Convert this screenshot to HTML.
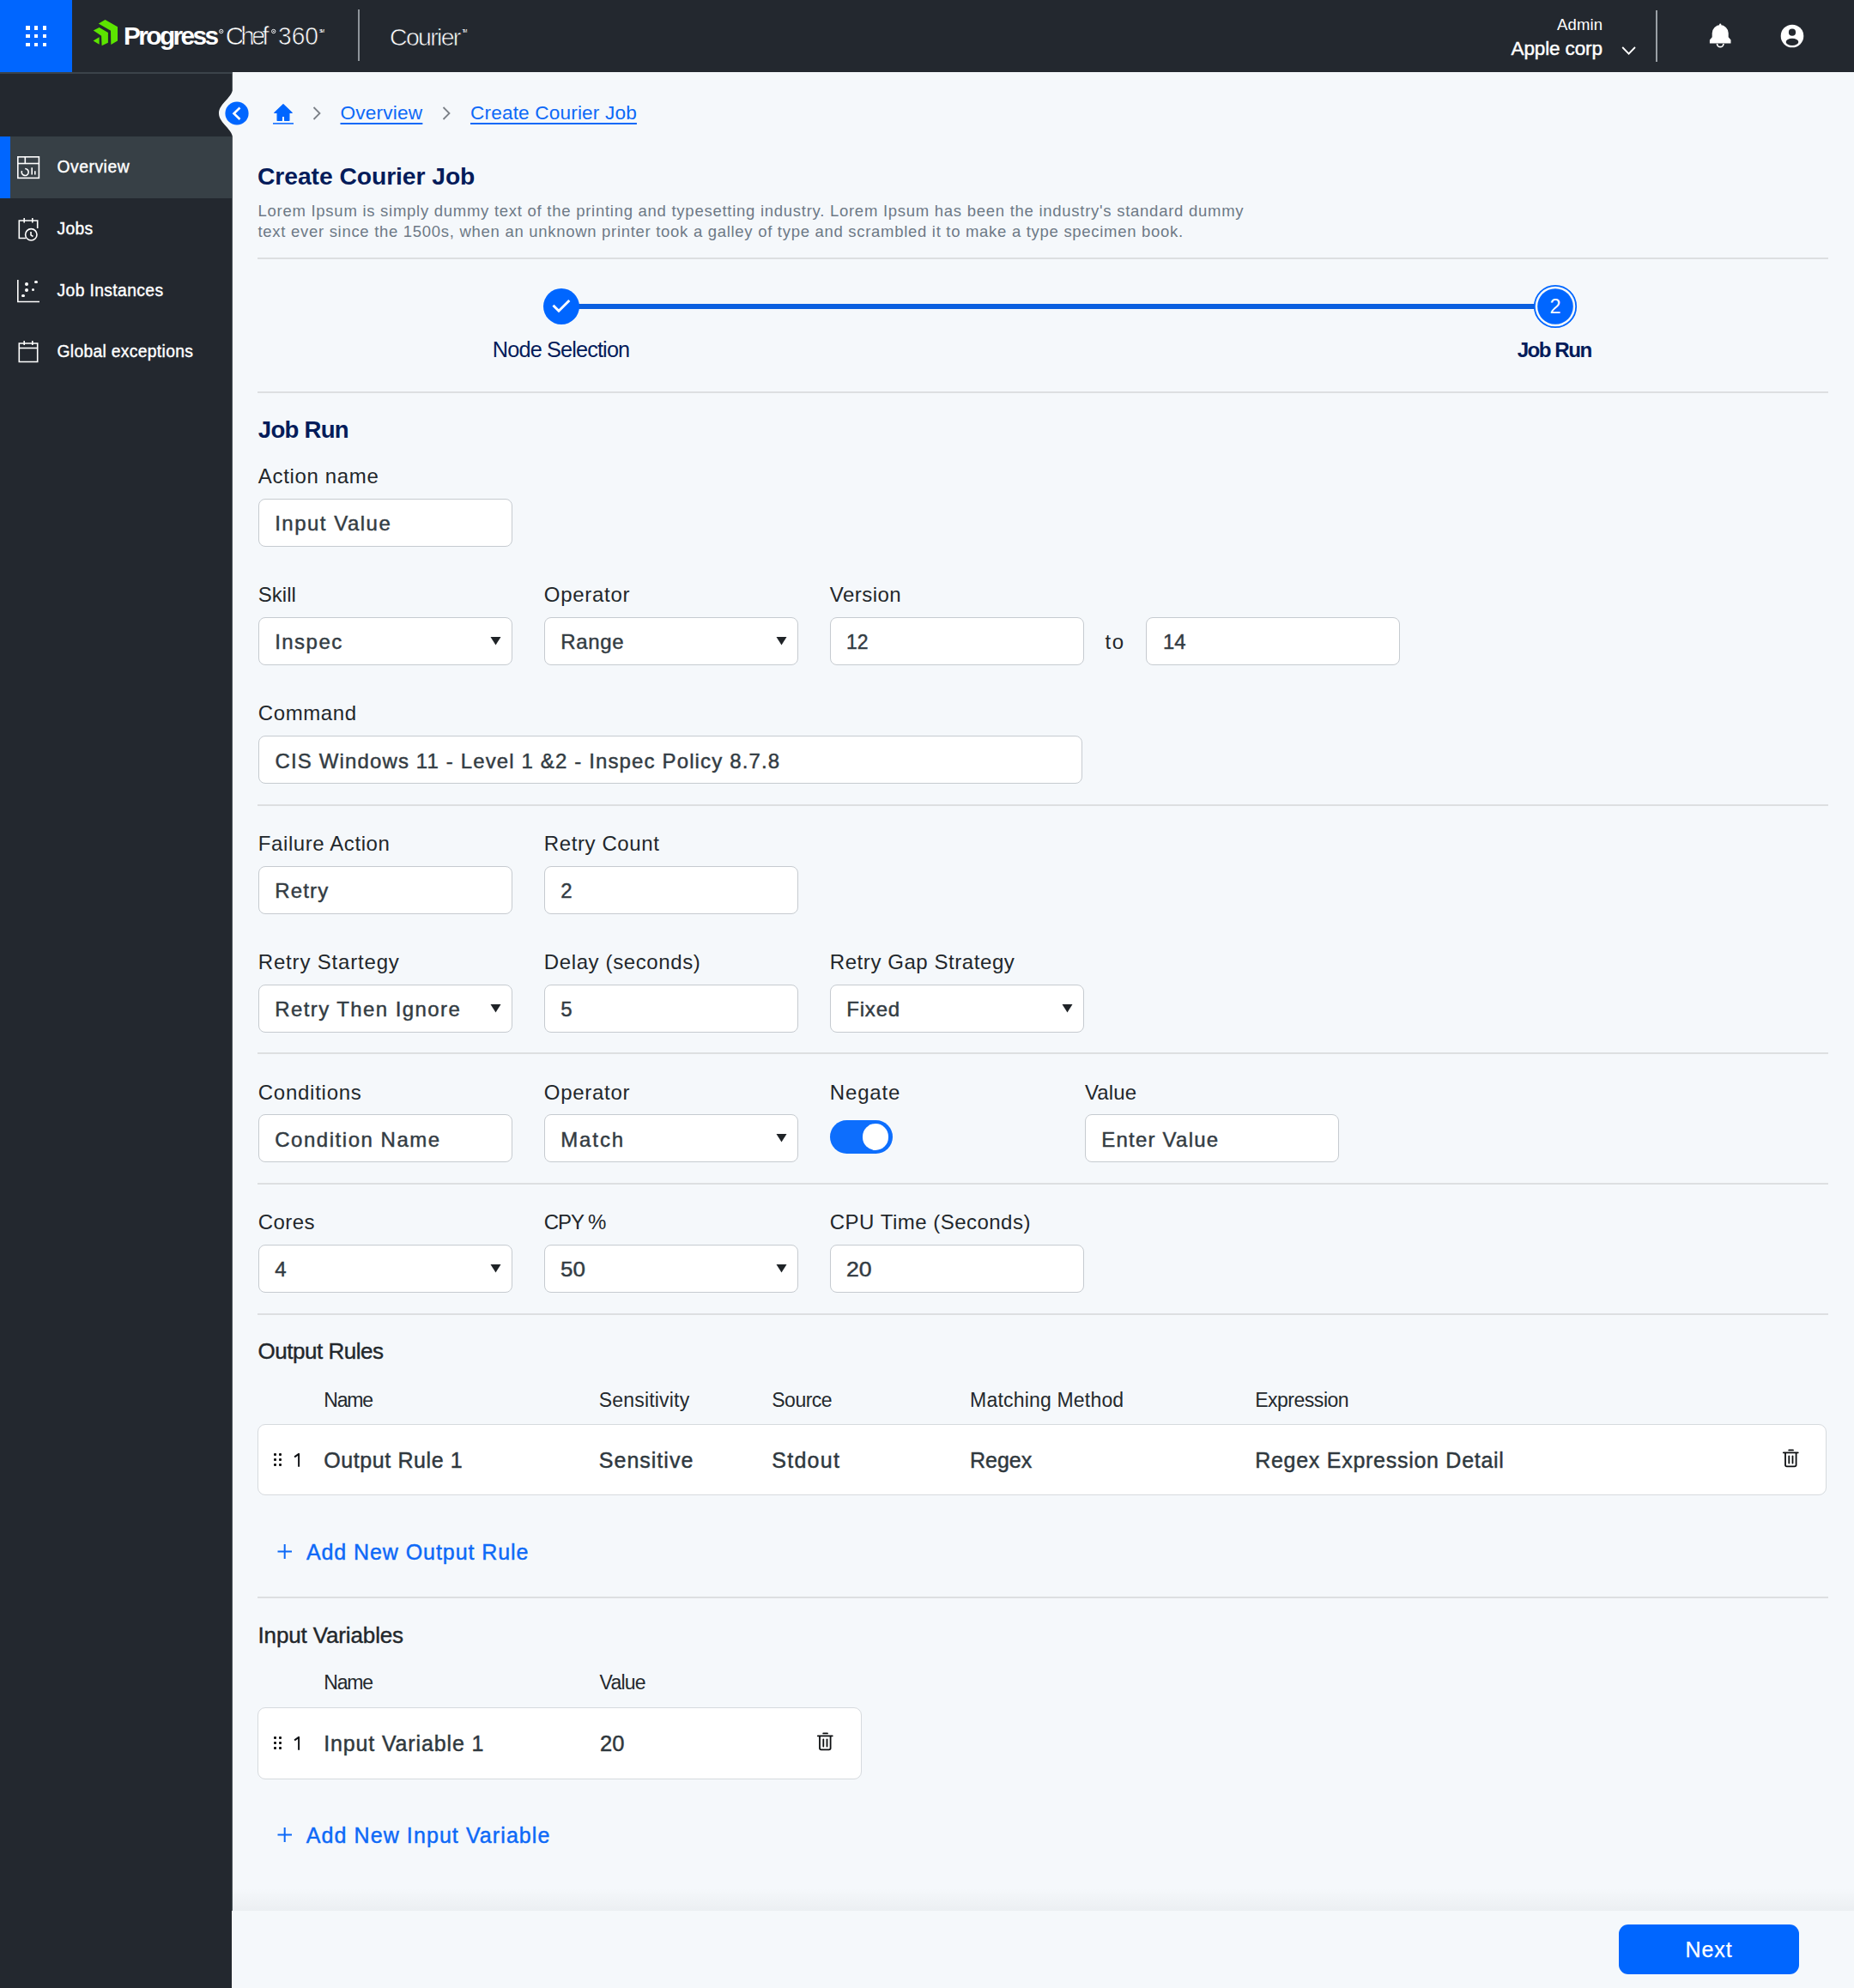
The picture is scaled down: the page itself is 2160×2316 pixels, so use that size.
<!DOCTYPE html>
<html><head><meta charset="utf-8"><title>Create Courier Job</title>
<style>
html,body{margin:0;padding:0;width:2160px;height:2316px;overflow:hidden;background:#f5f8fb;}
body{position:relative;font-family:"Liberation Sans", sans-serif;}
.t{position:absolute;white-space:nowrap;}
</style></head><body>
<div style="position:absolute;left:0px;top:0px;width:2160px;height:2316px;background:#f5f8fb;"></div>
<div style="position:absolute;left:0px;top:0px;width:2160px;height:84px;background:#23282f;"></div>
<div style="position:absolute;left:0px;top:0px;width:84px;height:84px;background:#0066ff;"></div>
<div style="position:absolute;left:30.0px;top:30.0px;width:4.5px;height:4.5px;background:#fff;"></div>
<div style="position:absolute;left:30.0px;top:39.75px;width:4.5px;height:4.5px;background:#fff;"></div>
<div style="position:absolute;left:30.0px;top:49.5px;width:4.5px;height:4.5px;background:#fff;"></div>
<div style="position:absolute;left:39.75px;top:30.0px;width:4.5px;height:4.5px;background:#fff;"></div>
<div style="position:absolute;left:39.75px;top:39.75px;width:4.5px;height:4.5px;background:#fff;"></div>
<div style="position:absolute;left:39.75px;top:49.5px;width:4.5px;height:4.5px;background:#fff;"></div>
<div style="position:absolute;left:49.5px;top:30.0px;width:4.5px;height:4.5px;background:#fff;"></div>
<div style="position:absolute;left:49.5px;top:39.75px;width:4.5px;height:4.5px;background:#fff;"></div>
<div style="position:absolute;left:49.5px;top:49.5px;width:4.5px;height:4.5px;background:#fff;"></div>
<svg style="position:absolute;left:0;top:0" width="200" height="84" viewBox="0 0 200 84">
<g fill="#5ce500">
<polygon points="114.8,27.4 122.5,23 137,31.2 137,47.6 129.3,52 129,35.8"/>
<polygon points="108.8,35.5 115.6,32 125.9,37.9 125.9,49.8 118.6,53.3 118.1,41.7"/>
<polygon points="108.6,47.4 115.6,43.3 115.6,51.7"/>
</g></svg>
<div class="t" style="left:144.00px;top:27.07px;font-size:29.80px;line-height:29.80px;color:#fff;font-weight:700;letter-spacing:-2.571px;">Progress</div>
<div class="t" style="left:262.80px;top:27.07px;font-size:29.80px;line-height:29.80px;color:#fff;letter-spacing:-4.050px;-webkit-text-stroke:0.65px #fff;-webkit-text-stroke-color:#23282f;">Chef</div>
<div class="t" style="left:323.50px;top:27.07px;font-size:29.80px;line-height:29.80px;color:#fff;-webkit-text-stroke:0.65px #fff;-webkit-text-stroke-color:#23282f;transform:scaleX(0.9448);transform-origin:0 0;">360</div>
<svg style="position:absolute;left:250px;top:28px" width="140" height="16" viewBox="250 28 140 16">
<circle cx="257.7" cy="36.5" r="2.2" fill="none" stroke="#fff" stroke-width="0.9"/>
<circle cx="257.7" cy="36.5" r="0.8" fill="#fff"/>
<circle cx="318.7" cy="36.5" r="2.2" fill="none" stroke="#fff" stroke-width="0.9"/>
<circle cx="318.7" cy="36.5" r="0.8" fill="#fff"/>
</svg>
<div class="t" style="left:372.00px;top:34.34px;font-size:5.50px;line-height:5.50px;color:#fff;letter-spacing:-2.250px;">SM</div>
<div style="position:absolute;left:417px;top:11px;width:2px;height:60px;background:#8e949a;"></div>
<div class="t" style="left:454.00px;top:28.57px;font-size:28.50px;line-height:28.50px;color:#fff;letter-spacing:-1.692px;-webkit-text-stroke:0.65px #fff;-webkit-text-stroke-color:#23282f;">Courier</div>
<div class="t" style="left:538.50px;top:34.34px;font-size:5.50px;line-height:5.50px;color:#fff;letter-spacing:-2.000px;">TM</div>
<div class="t" style="right:292.88px;text-align:right;top:19.64px;font-size:18.50px;line-height:18.50px;color:#fff;letter-spacing:0.125px;">Admin</div>
<div class="t" style="right:293.12px;text-align:right;top:46.25px;font-size:22.50px;line-height:22.50px;color:#fff;letter-spacing:-0.119px;-webkit-text-stroke:0.45px #fff;">Apple corp</div>
<svg style="position:absolute;left:1886px;top:50px" width="24" height="18"><path d="M4.2,5 L11.6,12.6 L19,5" fill="none" stroke="#fff" stroke-width="1.8"/></svg>
<div style="position:absolute;left:1929px;top:12px;width:2px;height:60px;background:#9aa0a6;"></div>
<svg style="position:absolute;left:1988px;top:24px" width="32" height="34" viewBox="0 0 32 34">
<rect x="15.1" y="3.4" width="2.2" height="3.5" rx="1" fill="#fff"/>
<path d="M6.7,19.2 L6.7,14.6 A9.5,9.5 0 0 1 25.7,14.6 L25.7,19.2 L28.5,22.6 L28.5,26.5 L3.9,26.5 L3.9,22.6 Z" fill="#fff"/>
<path d="M12.5,27 A3.7,3.7 0 0 0 19.9,27" fill="none" stroke="#fff" stroke-width="1.7"/>
</svg>
<svg style="position:absolute;left:2070px;top:24px" width="36" height="36" viewBox="0 0 36 36">
<circle cx="18" cy="18" r="13.3" fill="#fff"/>
<circle cx="18" cy="13.7" r="4.1" fill="#23282f"/>
<ellipse cx="18" cy="24.9" rx="7.3" ry="4.2" fill="#23282f"/>
</svg>
<div style="position:absolute;left:0px;top:84px;width:270.5px;height:2232px;background:#23282f;"></div>
<div style="position:absolute;left:0px;top:84px;width:271px;height:1.5px;background:#3b434a;"></div>
<div style="position:absolute;left:270px;top:84px;width:1.2px;height:2142px;background:#4f585e;"></div>
<div style="position:absolute;left:0px;top:159px;width:270px;height:72px;background:#374046;"></div>
<div style="position:absolute;left:0px;top:159px;width:12px;height:72px;background:#0066ff;"></div>
<div class="t" style="left:66.50px;top:185.06px;font-size:19.30px;line-height:19.30px;color:#fff;letter-spacing:0.532px;-webkit-text-stroke:0.4px #fff;">Overview</div>
<div class="t" style="left:66.50px;top:256.86px;font-size:19.30px;line-height:19.30px;color:#fff;letter-spacing:0.325px;-webkit-text-stroke:0.4px #fff;">Jobs</div>
<div class="t" style="left:66.50px;top:328.56px;font-size:19.30px;line-height:19.30px;color:#fff;letter-spacing:0.387px;-webkit-text-stroke:0.4px #fff;">Job Instances</div>
<div class="t" style="left:66.50px;top:400.36px;font-size:19.30px;line-height:19.30px;color:#fff;letter-spacing:0.319px;-webkit-text-stroke:0.4px #fff;">Global exceptions</div>
<svg style="position:absolute;left:0;top:84px" width="60" height="360" viewBox="0 84 60 360" fill="none" stroke="#fff" stroke-width="1.6">
<rect x="20.8" y="182.8" width="24.6" height="24.6"/>
<line x1="20.8" y1="190.5" x2="45.4" y2="190.5"/>
<line x1="29.3" y1="182.8" x2="29.3" y2="190.5"/>
<path d="M25.5,199 A4,4 0 1 0 29.2,196.5"/>
<line x1="37.2" y1="195.3" x2="37.2" y2="203.5"/>
<line x1="40.8" y1="199.3" x2="40.8" y2="203.5"/>
<path d="M30,277.5 L22.3,277.5 L22.3,257 L43.7,257 L43.7,266"/>
<line x1="28.2" y1="254" x2="28.2" y2="259.5"/>
<line x1="37.8" y1="254" x2="37.8" y2="259.5"/>
<circle cx="36.3" cy="273.3" r="6.7"/>
<path d="M36,270 L36,273.8 L38.5,275.5"/>
<path d="M20.8,326 L20.8,351.5 L46,351.5"/>
<path d="M22.3,400 L43.7,400 L43.7,421.5 L22.3,421.5 Z"/>
<line x1="22.3" y1="405.5" x2="43.7" y2="405.5"/>
<line x1="28.2" y1="397" x2="28.2" y2="402"/>
<line x1="37.8" y1="397" x2="37.8" y2="402"/>
</svg>
<div style="position:absolute;left:40.4px;top:326.6px;width:3.8px;height:3.8px;background:#fff;border-radius:50%;"></div>
<div style="position:absolute;left:29.3px;top:329.40000000000003px;width:3.8px;height:3.8px;background:#fff;border-radius:50%;"></div>
<div style="position:absolute;left:29.3px;top:336.1px;width:3.8px;height:3.8px;background:#fff;border-radius:50%;"></div>
<div style="position:absolute;left:36.6px;top:335.6px;width:3.8px;height:3.8px;background:#fff;border-radius:50%;"></div>
<div style="position:absolute;left:25.1px;top:342.70000000000005px;width:3.8px;height:3.8px;background:#fff;border-radius:50%;"></div>
<svg style="position:absolute;left:240px;top:96px" width="60" height="72" viewBox="240 96 60 72">
<path d="M272,100 C272,114 255,120 255,132 C255,144 272,150 272,164 Z" fill="#f5f8fb"/>
<circle cx="276" cy="132" r="13.6" fill="#0066ff"/>
<path d="M279.5,125.5 L272.5,132.2 L279.5,139" fill="none" stroke="#fff" stroke-width="2.6"/>
</svg>
<svg style="position:absolute;left:314px;top:116px" width="32" height="32" viewBox="314 116 32 32">
<path d="M330,121.6 L340.2,131.4 L336.9,131.4 L336.9,140.3 L331.6,140.3 L331.6,135.4 L328.4,135.4 L328.4,140.3 L323.1,140.3 L323.1,131.4 L319.8,131.4 Z" fill="#0066ff" stroke="#0066ff" stroke-width="1.2" stroke-linejoin="round"/>
<rect x="318" y="143" width="24" height="1.8" fill="#2a7cff"/>
</svg>
<svg style="position:absolute;left:363px;top:122px" width="14" height="20"><path d="M2.5,3 L9.5,10 L2.5,17" fill="none" stroke="#7b8087" stroke-width="1.8"/></svg>
<svg style="position:absolute;left:513.5px;top:122px" width="14" height="20"><path d="M2.5,3 L9.5,10 L2.5,17" fill="none" stroke="#7b8087" stroke-width="1.8"/></svg>
<div class="t" style="left:396.50px;top:121.16px;font-size:22.60px;line-height:22.60px;color:#0d69f7;letter-spacing:0.214px;text-decoration:underline;text-underline-offset:4px;text-decoration-thickness:1.6px;">Overview</div>
<div class="t" style="left:548.00px;top:121.16px;font-size:22.60px;line-height:22.60px;color:#0d69f7;letter-spacing:0.169px;text-decoration:underline;text-underline-offset:4px;text-decoration-thickness:1.6px;">Create Courier Job</div>
<div class="t" style="left:300.00px;top:190.84px;font-size:28.30px;line-height:28.30px;color:#041c5a;font-weight:700;letter-spacing:-0.081px;">Create Courier Job</div>
<div class="t" style="left:300.50px;top:236.54px;font-size:18.50px;line-height:18.50px;color:#6d7986;letter-spacing:0.733px;">Lorem Ipsum is simply dummy text of the printing and typesetting industry. Lorem Ipsum has been the industry&#x27;s standard dummy</div>
<div class="t" style="left:300.50px;top:260.54px;font-size:18.50px;line-height:18.50px;color:#6d7986;letter-spacing:0.705px;">text ever since the 1500s, when an unknown printer took a galley of type and scrambled it to make a type specimen book.</div>
<div style="position:absolute;left:300px;top:300.4px;width:1830px;height:2px;background:#dddfe1;"></div>
<div style="position:absolute;left:674px;top:354.3px;width:1114px;height:5.6px;background:#0a5fe0;"></div>
<svg style="position:absolute;left:600px;top:300px" width="1300" height="120" viewBox="600 300 1300 120">
<circle cx="654" cy="357" r="21" fill="#0066ff"/>
<path d="M644.5,355.8 L651,362.2 L663.3,350" fill="none" stroke="#fff" stroke-width="3"/>
<circle cx="1812" cy="357" r="24.2" fill="none" stroke="#0066ff" stroke-width="1.8"/>
<circle cx="1812" cy="357" r="20.8" fill="#0066ff"/>
</svg>
<div class="t" style="left:1312.00px;width:1000px;text-align:center;top:345.60px;font-size:23.50px;line-height:23.50px;color:#fff;">2</div>
<div class="t" style="left:153.57px;width:1000px;text-align:center;top:394.88px;font-size:25.30px;line-height:25.30px;color:#041c5a;letter-spacing:-0.865px;">Node Selection</div>
<div class="t" style="left:1310.75px;width:1000px;text-align:center;top:395.81px;font-size:24.20px;line-height:24.20px;color:#041c5a;font-weight:700;letter-spacing:-1.500px;">Job Run</div>
<div style="position:absolute;left:300px;top:456.4px;width:1830px;height:2px;background:#dddfe1;"></div>
<div class="t" style="left:300.80px;top:487.43px;font-size:27.60px;line-height:27.60px;color:#041c5a;font-weight:700;letter-spacing:-0.750px;">Job Run</div>
<div class="t" style="left:300.80px;top:542.98px;font-size:24.00px;line-height:24.00px;color:#22272b;letter-spacing:0.662px;">Action name</div>
<div style="position:absolute;left:300.5px;top:581px;width:296px;height:56px;background:#fff;border:1.7px solid #c6cbd0;border-radius:8px;box-sizing:border-box;"></div>
<div class="t" style="left:320.20px;top:598.28px;font-size:24.00px;line-height:24.00px;color:#333c43;letter-spacing:1.493px;-webkit-text-stroke:0.45px #333c43;">Input Value</div>
<div class="t" style="left:300.80px;top:680.68px;font-size:24.00px;line-height:24.00px;color:#22272b;">Skill</div>
<div class="t" style="left:633.80px;top:680.68px;font-size:24.00px;line-height:24.00px;color:#22272b;letter-spacing:0.707px;">Operator</div>
<div class="t" style="left:966.80px;top:680.68px;font-size:24.00px;line-height:24.00px;color:#22272b;letter-spacing:0.467px;">Version</div>
<div style="position:absolute;left:300.5px;top:719px;width:296px;height:56px;background:#fff;border:1.7px solid #c6cbd0;border-radius:8px;box-sizing:border-box;"></div>
<div class="t" style="left:320.20px;top:736.28px;font-size:24.00px;line-height:24.00px;color:#333c43;letter-spacing:1.460px;-webkit-text-stroke:0.45px #333c43;">Inspec</div>
<svg style="position:absolute;left:570.5px;top:741px" width="14" height="12"><path d="M0.5,1 L12.5,1 L6.5,10.5 Z" fill="#1f2327"/></svg>
<div style="position:absolute;left:633.5px;top:719px;width:296px;height:56px;background:#fff;border:1.7px solid #c6cbd0;border-radius:8px;box-sizing:border-box;"></div>
<div class="t" style="left:653.20px;top:736.28px;font-size:24.00px;line-height:24.00px;color:#333c43;letter-spacing:0.650px;-webkit-text-stroke:0.45px #333c43;">Range</div>
<svg style="position:absolute;left:903.5px;top:741px" width="14" height="12"><path d="M0.5,1 L12.5,1 L6.5,10.5 Z" fill="#1f2327"/></svg>
<div style="position:absolute;left:966.5px;top:719px;width:296px;height:56px;background:#fff;border:1.7px solid #c6cbd0;border-radius:8px;box-sizing:border-box;"></div>
<div class="t" style="left:986.20px;top:736.28px;font-size:24.00px;line-height:24.00px;color:#333c43;-webkit-text-stroke:0.45px #333c43;transform:scaleX(0.9559);transform-origin:0 0;">12</div>
<div class="t" style="left:1287.60px;top:735.98px;font-size:24.00px;line-height:24.00px;color:#22272b;letter-spacing:1.400px;">to</div>
<div style="position:absolute;left:1335.3px;top:719px;width:296px;height:56px;background:#fff;border:1.7px solid #c6cbd0;border-radius:8px;box-sizing:border-box;"></div>
<div class="t" style="left:1355.00px;top:736.28px;font-size:24.00px;line-height:24.00px;color:#333c43;-webkit-text-stroke:0.45px #333c43;transform:scaleX(0.9926);transform-origin:0 0;">14</div>
<div class="t" style="left:300.80px;top:819.28px;font-size:24.00px;line-height:24.00px;color:#22272b;letter-spacing:0.592px;">Command</div>
<div style="position:absolute;left:300.5px;top:857px;width:960px;height:56px;background:#fff;border:1.7px solid #c6cbd0;border-radius:8px;box-sizing:border-box;"></div>
<div class="t" style="left:320.50px;top:874.88px;font-size:24.00px;line-height:24.00px;color:#333c43;letter-spacing:1.134px;-webkit-text-stroke:0.45px #333c43;">CIS Windows 11 - Level 1 &amp;2 - Inspec Policy 8.7.8</div>
<div style="position:absolute;left:300px;top:936.9px;width:1830px;height:2px;background:#dddfe1;"></div>
<div class="t" style="left:300.80px;top:971.38px;font-size:24.00px;line-height:24.00px;color:#22272b;letter-spacing:0.587px;">Failure Action</div>
<div class="t" style="left:633.80px;top:971.38px;font-size:24.00px;line-height:24.00px;color:#22272b;letter-spacing:0.600px;">Retry Count</div>
<div style="position:absolute;left:300.5px;top:1008.7px;width:296px;height:56px;background:#fff;border:1.7px solid #c6cbd0;border-radius:8px;box-sizing:border-box;"></div>
<div class="t" style="left:320.20px;top:1025.98px;font-size:24.00px;line-height:24.00px;color:#333c43;letter-spacing:1.194px;-webkit-text-stroke:0.45px #333c43;">Retry</div>
<div style="position:absolute;left:633.5px;top:1008.7px;width:296px;height:56px;background:#fff;border:1.7px solid #c6cbd0;border-radius:8px;box-sizing:border-box;"></div>
<div class="t" style="left:653.20px;top:1025.98px;font-size:24.00px;line-height:24.00px;color:#333c43;-webkit-text-stroke:0.45px #333c43;">2</div>
<div class="t" style="left:300.80px;top:1109.48px;font-size:24.00px;line-height:24.00px;color:#22272b;letter-spacing:0.817px;">Retry Startegy</div>
<div class="t" style="left:633.80px;top:1109.48px;font-size:24.00px;line-height:24.00px;color:#22272b;letter-spacing:0.616px;">Delay (seconds)</div>
<div class="t" style="left:966.80px;top:1109.48px;font-size:24.00px;line-height:24.00px;color:#22272b;letter-spacing:0.566px;">Retry Gap Strategy</div>
<div style="position:absolute;left:300.5px;top:1146.9px;width:296px;height:56px;background:#fff;border:1.7px solid #c6cbd0;border-radius:8px;box-sizing:border-box;"></div>
<div class="t" style="left:320.20px;top:1164.18px;font-size:24.00px;line-height:24.00px;color:#333c43;letter-spacing:1.409px;-webkit-text-stroke:0.45px #333c43;">Retry Then Ignore</div>
<svg style="position:absolute;left:570.5px;top:1168.9px" width="14" height="12"><path d="M0.5,1 L12.5,1 L6.5,10.5 Z" fill="#1f2327"/></svg>
<div style="position:absolute;left:633.5px;top:1146.9px;width:296px;height:56px;background:#fff;border:1.7px solid #c6cbd0;border-radius:8px;box-sizing:border-box;"></div>
<div class="t" style="left:653.20px;top:1164.18px;font-size:24.00px;line-height:24.00px;color:#333c43;-webkit-text-stroke:0.45px #333c43;">5</div>
<div style="position:absolute;left:966.5px;top:1146.9px;width:296px;height:56px;background:#fff;border:1.7px solid #c6cbd0;border-radius:8px;box-sizing:border-box;"></div>
<div class="t" style="left:986.20px;top:1164.18px;font-size:24.00px;line-height:24.00px;color:#333c43;letter-spacing:0.825px;-webkit-text-stroke:0.45px #333c43;">Fixed</div>
<svg style="position:absolute;left:1236.5px;top:1168.9px" width="14" height="12"><path d="M0.5,1 L12.5,1 L6.5,10.5 Z" fill="#1f2327"/></svg>
<div style="position:absolute;left:300px;top:1226.4px;width:1830px;height:2px;background:#dddfe1;"></div>
<div class="t" style="left:300.80px;top:1260.88px;font-size:24.00px;line-height:24.00px;color:#22272b;letter-spacing:0.736px;">Conditions</div>
<div class="t" style="left:633.80px;top:1260.88px;font-size:24.00px;line-height:24.00px;color:#22272b;letter-spacing:0.707px;">Operator</div>
<div class="t" style="left:966.80px;top:1260.88px;font-size:24.00px;line-height:24.00px;color:#22272b;letter-spacing:0.845px;">Negate</div>
<div class="t" style="left:1264.00px;top:1260.88px;font-size:24.00px;line-height:24.00px;color:#22272b;letter-spacing:0.094px;">Value</div>
<div style="position:absolute;left:300.5px;top:1298.4px;width:296px;height:56px;background:#fff;border:1.7px solid #c6cbd0;border-radius:8px;box-sizing:border-box;"></div>
<div class="t" style="left:320.20px;top:1315.68px;font-size:24.00px;line-height:24.00px;color:#333c43;letter-spacing:1.533px;-webkit-text-stroke:0.45px #333c43;">Condition Name</div>
<div style="position:absolute;left:633.5px;top:1298.4px;width:296px;height:56px;background:#fff;border:1.7px solid #c6cbd0;border-radius:8px;box-sizing:border-box;"></div>
<div class="t" style="left:653.20px;top:1315.68px;font-size:24.00px;line-height:24.00px;color:#333c43;letter-spacing:1.894px;-webkit-text-stroke:0.45px #333c43;">Match</div>
<svg style="position:absolute;left:903.5px;top:1320.4px" width="14" height="12"><path d="M0.5,1 L12.5,1 L6.5,10.5 Z" fill="#1f2327"/></svg>
<div style="position:absolute;left:967.2px;top:1304.8px;width:72.4px;height:39px;background:#0d6efd;border-radius:20px;"></div>
<div style="position:absolute;left:1004.7px;top:1309.3px;width:30.4px;height:30.4px;background:#fff;border-radius:50%;"></div>
<div style="position:absolute;left:1263.5px;top:1298.4px;width:296px;height:56px;background:#fff;border:1.7px solid #c6cbd0;border-radius:8px;box-sizing:border-box;"></div>
<div class="t" style="left:1283.20px;top:1315.68px;font-size:24.00px;line-height:24.00px;color:#333c43;letter-spacing:1.233px;-webkit-text-stroke:0.45px #333c43;">Enter Value</div>
<div style="position:absolute;left:300px;top:1378.4px;width:1830px;height:2px;background:#dddfe1;"></div>
<div class="t" style="left:300.80px;top:1412.18px;font-size:24.00px;line-height:24.00px;color:#22272b;letter-spacing:0.400px;">Cores</div>
<div class="t" style="left:633.80px;top:1412.18px;font-size:24.00px;line-height:24.00px;color:#22272b;letter-spacing:-1.094px;">CPY %</div>
<div class="t" style="left:966.80px;top:1412.18px;font-size:24.00px;line-height:24.00px;color:#22272b;letter-spacing:0.484px;">CPU Time (Seconds)</div>
<div style="position:absolute;left:300.5px;top:1449.6px;width:296px;height:56px;background:#fff;border:1.7px solid #c6cbd0;border-radius:8px;box-sizing:border-box;"></div>
<div class="t" style="left:320.20px;top:1466.88px;font-size:24.00px;line-height:24.00px;color:#333c43;-webkit-text-stroke:0.45px #333c43;">4</div>
<svg style="position:absolute;left:570.5px;top:1471.6px" width="14" height="12"><path d="M0.5,1 L12.5,1 L6.5,10.5 Z" fill="#1f2327"/></svg>
<div style="position:absolute;left:633.5px;top:1449.6px;width:296px;height:56px;background:#fff;border:1.7px solid #c6cbd0;border-radius:8px;box-sizing:border-box;"></div>
<div class="t" style="left:653.20px;top:1466.88px;font-size:24.00px;line-height:24.00px;color:#333c43;-webkit-text-stroke:0.45px #333c43;transform:scaleX(1.0809);transform-origin:0 0;">50</div>
<svg style="position:absolute;left:903.5px;top:1471.6px" width="14" height="12"><path d="M0.5,1 L12.5,1 L6.5,10.5 Z" fill="#1f2327"/></svg>
<div style="position:absolute;left:966.5px;top:1449.6px;width:296px;height:56px;background:#fff;border:1.7px solid #c6cbd0;border-radius:8px;box-sizing:border-box;"></div>
<div class="t" style="left:986.20px;top:1466.88px;font-size:24.00px;line-height:24.00px;color:#333c43;-webkit-text-stroke:0.45px #333c43;transform:scaleX(1.1103);transform-origin:0 0;">20</div>
<div style="position:absolute;left:300px;top:1529.9px;width:1830px;height:2px;background:#dddfe1;"></div>
<div class="t" style="left:300.50px;top:1561.29px;font-size:26.00px;line-height:26.00px;color:#22272b;letter-spacing:-0.468px;-webkit-text-stroke:0.4px #22272b;">Output Rules</div>
<div class="t" style="left:377.20px;top:1619.53px;font-size:23.00px;line-height:23.00px;color:#24292d;letter-spacing:-1.125px;">Name</div>
<div class="t" style="left:697.80px;top:1619.53px;font-size:23.00px;line-height:23.00px;color:#24292d;letter-spacing:0.180px;">Sensitivity</div>
<div class="t" style="left:899.30px;top:1619.53px;font-size:23.00px;line-height:23.00px;color:#24292d;letter-spacing:-0.515px;">Source</div>
<div class="t" style="left:1130.10px;top:1619.53px;font-size:23.00px;line-height:23.00px;color:#24292d;letter-spacing:0.188px;">Matching Method</div>
<div class="t" style="left:1462.20px;top:1619.53px;font-size:23.00px;line-height:23.00px;color:#24292d;letter-spacing:-0.483px;">Expression</div>
<div style="position:absolute;left:299.5px;top:1658.7px;width:1828.5px;height:83.7px;background:#fff;border:1.7px solid #d6dade;border-radius:9px;box-sizing:border-box;"></div>
<div style="position:absolute;left:319.0px;top:1693px;width:3.2px;height:3.2px;background:#111;border-radius:1px;"></div>
<div style="position:absolute;left:319.0px;top:1699px;width:3.2px;height:3.2px;background:#111;border-radius:1px;"></div>
<div style="position:absolute;left:319.0px;top:1705px;width:3.2px;height:3.2px;background:#111;border-radius:1px;"></div>
<div style="position:absolute;left:325.1px;top:1693px;width:3.2px;height:3.2px;background:#111;border-radius:1px;"></div>
<div style="position:absolute;left:325.1px;top:1699px;width:3.2px;height:3.2px;background:#111;border-radius:1px;"></div>
<div style="position:absolute;left:325.1px;top:1705px;width:3.2px;height:3.2px;background:#111;border-radius:1px;"></div>
<svg style="position:absolute;left:338px;top:1690.6px" width="16" height="24" viewBox="338 1690.6 16 24"><path d="M343.1,1697.0 L348.1,1693.5 L348.1,1708.3999999999999" fill="none" stroke="#0e1114" stroke-width="1.95" stroke-linejoin="round" stroke-linecap="butt"/></svg>
<div class="t" style="left:377.20px;top:1689.43px;font-size:25.00px;line-height:25.00px;color:#2f383e;letter-spacing:0.608px;-webkit-text-stroke:0.45px #2f383e;">Output Rule 1</div>
<div class="t" style="left:697.80px;top:1689.43px;font-size:25.00px;line-height:25.00px;color:#2f383e;letter-spacing:1.006px;-webkit-text-stroke:0.45px #2f383e;">Sensitive</div>
<div class="t" style="left:899.30px;top:1689.43px;font-size:25.00px;line-height:25.00px;color:#2f383e;letter-spacing:1.260px;-webkit-text-stroke:0.45px #2f383e;">Stdout</div>
<div class="t" style="left:1130.10px;top:1689.43px;font-size:25.00px;line-height:25.00px;color:#2f383e;letter-spacing:-0.050px;-webkit-text-stroke:0.45px #2f383e;">Regex</div>
<div class="t" style="left:1462.20px;top:1689.43px;font-size:25.00px;line-height:25.00px;color:#2f383e;letter-spacing:0.727px;-webkit-text-stroke:0.45px #2f383e;">Regex Expression Detail</div>
<svg style="position:absolute;left:2074px;top:1685px" width="26" height="28" viewBox="0 0 26 28" fill="none" stroke="#0d0f11" stroke-width="1.8">
<line x1="10.2" y1="4.4" x2="15" y2="4.4" stroke-linecap="round"/>
<line x1="3.8" y1="7.3" x2="20.8" y2="7.3" stroke-linecap="round"/>
<path d="M6,7.5 L6,21.6 Q6,23.4 7.8,23.4 L16.8,23.4 Q18.6,23.4 18.6,21.6 L18.6,7.5"/>
<line x1="10.3" y1="11.5" x2="10.3" y2="19.6" stroke-linecap="round"/>
<line x1="14.5" y1="11.5" x2="14.5" y2="19.6" stroke-linecap="round"/>
</svg>
<svg style="position:absolute;left:320px;top:1795px" width="24" height="24"><path d="M11.7,4 L11.7,21 M3.5,12.5 L20,12.5" stroke="#0d69f7" stroke-width="2"/></svg>
<div class="t" style="left:356.90px;top:1796.03px;font-size:25.00px;line-height:25.00px;color:#0d69f7;letter-spacing:0.933px;-webkit-text-stroke:0.45px #0d69f7;">Add New Output Rule</div>
<div style="position:absolute;left:300px;top:1859.7px;width:1830px;height:2px;background:#dddfe1;"></div>
<div class="t" style="left:300.50px;top:1891.59px;font-size:26.00px;line-height:26.00px;color:#22272b;letter-spacing:-0.136px;-webkit-text-stroke:0.4px #22272b;">Input Variables</div>
<div class="t" style="left:377.20px;top:1949.33px;font-size:23.00px;line-height:23.00px;color:#24292d;letter-spacing:-1.125px;">Name</div>
<div class="t" style="left:698.60px;top:1949.33px;font-size:23.00px;line-height:23.00px;color:#24292d;letter-spacing:-0.781px;">Value</div>
<div style="position:absolute;left:299.8px;top:1988.9px;width:703.8px;height:84.1px;background:#fff;border:1.7px solid #d6dade;border-radius:9px;box-sizing:border-box;"></div>
<div style="position:absolute;left:319.0px;top:2023.2px;width:3.2px;height:3.2px;background:#111;border-radius:1px;"></div>
<div style="position:absolute;left:319.0px;top:2029.2px;width:3.2px;height:3.2px;background:#111;border-radius:1px;"></div>
<div style="position:absolute;left:319.0px;top:2035.2px;width:3.2px;height:3.2px;background:#111;border-radius:1px;"></div>
<div style="position:absolute;left:325.1px;top:2023.2px;width:3.2px;height:3.2px;background:#111;border-radius:1px;"></div>
<div style="position:absolute;left:325.1px;top:2029.2px;width:3.2px;height:3.2px;background:#111;border-radius:1px;"></div>
<div style="position:absolute;left:325.1px;top:2035.2px;width:3.2px;height:3.2px;background:#111;border-radius:1px;"></div>
<svg style="position:absolute;left:338px;top:2020.6px" width="16" height="24" viewBox="338 2020.6 16 24"><path d="M343.1,2027.0 L348.1,2023.5 L348.1,2038.3999999999999" fill="none" stroke="#0e1114" stroke-width="1.95" stroke-linejoin="round" stroke-linecap="butt"/></svg>
<div class="t" style="left:377.20px;top:2019.33px;font-size:25.00px;line-height:25.00px;color:#2f383e;letter-spacing:0.860px;-webkit-text-stroke:0.45px #2f383e;">Input Variable 1</div>
<div class="t" style="left:698.60px;top:2019.33px;font-size:25.00px;line-height:25.00px;color:#2f383e;-webkit-text-stroke:0.45px #2f383e;transform:scaleX(1.0213);transform-origin:0 0;">20</div>
<svg style="position:absolute;left:948.5px;top:2015px" width="26" height="28" viewBox="0 0 26 28" fill="none" stroke="#0d0f11" stroke-width="1.8">
<line x1="10.2" y1="4.4" x2="15" y2="4.4" stroke-linecap="round"/>
<line x1="3.8" y1="7.3" x2="20.8" y2="7.3" stroke-linecap="round"/>
<path d="M6,7.5 L6,21.6 Q6,23.4 7.8,23.4 L16.8,23.4 Q18.6,23.4 18.6,21.6 L18.6,7.5"/>
<line x1="10.3" y1="11.5" x2="10.3" y2="19.6" stroke-linecap="round"/>
<line x1="14.5" y1="11.5" x2="14.5" y2="19.6" stroke-linecap="round"/>
</svg>
<svg style="position:absolute;left:320px;top:2125px" width="24" height="24"><path d="M11.7,4 L11.7,21 M3.5,12.5 L20,12.5" stroke="#0d69f7" stroke-width="2"/></svg>
<div class="t" style="left:356.80px;top:2126.03px;font-size:25.00px;line-height:25.00px;color:#0d69f7;letter-spacing:1.086px;-webkit-text-stroke:0.45px #0d69f7;">Add New Input Variable</div>
<div style="position:absolute;left:270px;top:2200px;width:1890px;height:26px;background:linear-gradient(to bottom, rgba(0,0,0,0), rgba(20,30,40,0.045));"></div>
<div style="position:absolute;left:270px;top:2225.6px;width:1890px;height:91px;background:#f5f8fb;"></div>
<div style="position:absolute;left:1885.6px;top:2242.4px;width:210px;height:57.2px;background:#0066ff;border-radius:11px;"></div>
<div class="t" style="left:1491.05px;width:1000px;text-align:center;top:2259.23px;font-size:25.00px;line-height:25.00px;color:#fff;letter-spacing:0.892px;-webkit-text-stroke:0.25px #fff;">Next</div>
</body></html>
